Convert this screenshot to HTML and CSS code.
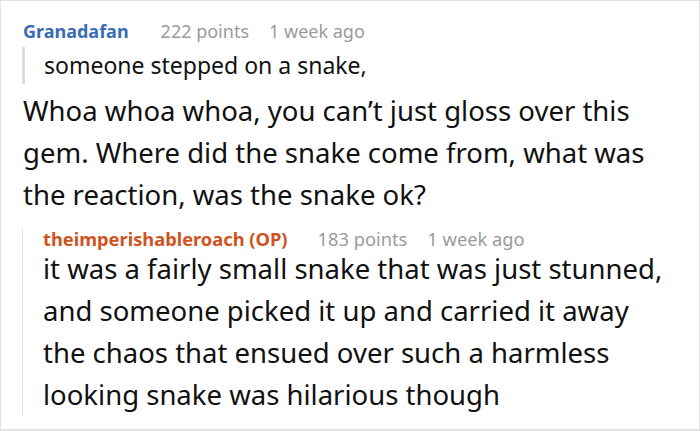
FILE: index.html
```html
<!DOCTYPE html>
<html>
<head>
<meta charset="utf-8">
<link rel="stylesheet" href="styles.css">
</head>
<body>
<div class="frame">
  <div class="comment">
    <div class="meta">
      <span class="author author-blue">Granadafan</span>
      <span class="points">222 points</span>
      <span class="time">1 week ago</span>
    </div>
    <blockquote class="quote">someone stepped on a snake,</blockquote>
    <p class="body">Whoa whoa whoa, you can’t just gloss over this<br>gem. Where did the snake come from, what was<br>the reaction, was the snake ok?</p>
    <div class="reply">
      <div class="meta meta-reply">
        <span class="author author-op">theimperishableroach (OP)</span>
        <span class="points">183 points</span>
        <span class="time">1 week ago</span>
      </div>
      <p class="body body-reply">it was a fairly small snake that was just stunned,<br>and someone picked it up and carried it away<br>the chaos that ensued over such a harmless<br>looking snake was hilarious though</p>
    </div>
  </div>
</div>
</body>
</html>
```

FILE: styles.css
```css
* { box-sizing: border-box; }
html, body { margin: 0; padding: 0; background: #fff; }
body { font-family: "Noto Sans", "Open Sans", sans-serif; color: #111; }

.frame {
  width: 700px;
  height: 431px;
  border: 1px solid #e2e2e2;
  border-bottom-width: 2px;
  padding: 18px 10px 0 21px;
  overflow: hidden;
}

.meta {
  display: flex;
  align-items: baseline;
  font-size: 18px;
  line-height: 25px;
  white-space: nowrap;
}
.author { font-weight: 700; margin-left: 1px; }
.author-blue { color: #3a6db6; }
.author-op { color: #d0531f; }
.points { color: #9a9a9a; margin-left: 32px; }
.time { color: #9a9a9a; margin-left: 20px; }

.quote {
  margin: 3px 0 0 0;
  border-left: 3px solid #dcdcdc;
  padding-left: 19px;
  font-size: 23px;
  line-height: 37px;
  color: #111;
  white-space: nowrap;
}

.body {
  margin: 6px 0 0 1px;
  font-size: 27.5px;
  line-height: 42px;
  white-space: nowrap;
}

.reply {
  margin-top: 12px;
  border-left: 1px solid #e4e4e4;
  padding-left: 20px;
}
.meta-reply { line-height: 22px; font-size: 18.3px; }
.meta-reply .author { margin-left: 0; }
.meta-reply .points { margin-left: 30px; }
.meta-reply .time { margin-left: 20px; }
.body-reply { margin: -2px 0 0 0; }
```
